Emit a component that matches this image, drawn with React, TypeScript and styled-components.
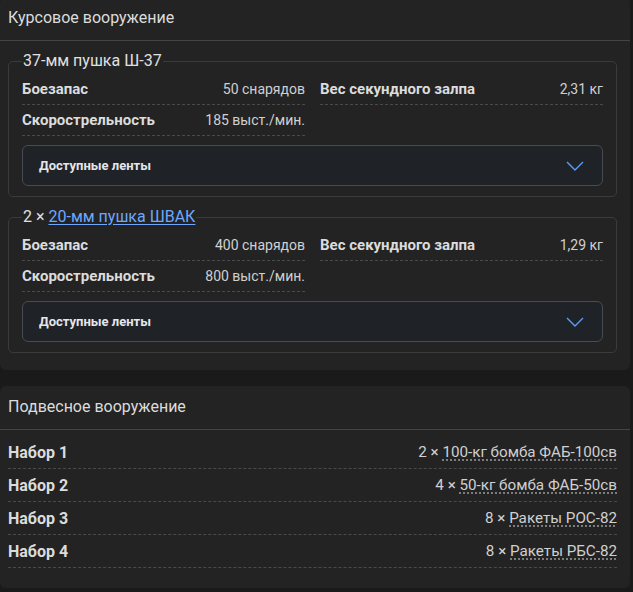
import React from 'react';
import styled, { createGlobalStyle } from 'styled-components';

const GlobalStyle = createGlobalStyle`
  html, body {
    margin: 0;
    padding: 0;
    background-color: #1a1a1a;
  }
  body {
    font-family: Roboto, "Liberation Sans", sans-serif;
    color: #dedede;
  }
`;

// Page and cards
const Page = styled.div`
  width: 630px;
  margin-top: -3px;
  display: flex;
  flex-direction: column;
  gap: 16px;
`;

const Card = styled.section`
  background-color: #232323;
  border-radius: 6px;
`;

const CardHeader = styled.h2`
  margin: 0;
  padding: 11px 8px 12px;
  font-size: 16px;
  line-height: 20px;
  font-weight: 400;
  color: #dcdcdc;
  border-bottom: 1px solid #444;
`;

const CardBody = styled.div<{ $top: number; $bottom: number; $gap: number }>`
  padding: ${p => p.$top}px 13px ${p => p.$bottom}px 8px;
  display: flex;
  flex-direction: column;
  gap: ${p => p.$gap}px;
`;

// Weapon block (fieldset with legend)
const WeaponBox = styled.fieldset`
  margin: 0;
  padding: 3px 13px 10px;
  border: 1px solid #3b3b3b;
  border-radius: 5px;
  min-width: 0;
`;

const WeaponTitle = styled.legend`
  padding: 0 1px;
  font-size: 16px;
  line-height: 20px;
  color: #e0e0e0;
`;

const Link = styled.a`
  color: #6ea8fe;
  text-decoration: underline;
  text-underline-offset: 2px;
`;

const StatGrid = styled.div`
  display: grid;
  grid-template-columns: 1fr 1fr;
  column-gap: 15px;
`;

const StatRow = styled.div`
  display: flex;
  justify-content: space-between;
  align-items: center;
  height: 30px;
  border-bottom: 1px dashed #4a4a4a;
`;

const StatLabel = styled.span`
  font-size: 15px;
  font-weight: 700;
  color: #dcdcdc;
`;

const StatValue = styled.span`
  font-size: 14px;
  color: #d0d0d0;
`;

const Belts = styled.button`
  margin-top: 9px;
  width: 100%;
  height: 41px;
  display: flex;
  align-items: center;
  justify-content: space-between;
  padding: 0 18px 0 16px;
  background-color: #1f2227;
  border: 1px solid #474c54;
  border-radius: 6px;
  font-family: Roboto, "Liberation Sans", sans-serif;
  font-size: 13px;
  font-weight: 700;
  color: #e4e6ea;
  cursor: pointer;
`;

// Suspended armament list
const LoadoutRow = styled.div`
  display: flex;
  justify-content: space-between;
  align-items: center;
  height: 32px;
  border-bottom: 1px dashed #4a4a4a;
`;

const LoadoutName = styled.span`
  font-size: 16px;
  font-weight: 700;
  color: #dcdcdc;
`;

const LoadoutValue = styled.span`
  font-size: 15.2px;
  color: #d0d0d0;
`;

const Dotted = styled.span`
  text-decoration: underline dotted;
  text-underline-offset: 3px;
  text-decoration-color: #999;
`;

const Chevron = () => (
  <svg width="18" height="10" viewBox="0 0 18 10" fill="none">
    <path d="M1 1l8 8 8-8" stroke="#5b9cf6" strokeWidth="1.4" />
  </svg>
);

const guns = [
  {
    id: 1,
    count: null,
    name: '37-мм пушка Ш-37',
    link: false,
    ammo: '50 снарядов',
    salvo: '2,31 кг',
    rate: '185 выст./мин.',
  },
  {
    id: 2,
    count: 2,
    name: '20-мм пушка ШВАК',
    link: true,
    ammo: '400 снарядов',
    salvo: '1,29 кг',
    rate: '800 выст./мин.',
  },
];

const loadouts = [
  { id: 1, count: 2, item: '100-кг бомба ФАБ-100св' },
  { id: 2, count: 4, item: '50-кг бомба ФАБ-50св' },
  { id: 3, count: 8, item: 'Ракеты РОС-82' },
  { id: 4, count: 8, item: 'Ракеты РБС-82' },
];

const App: React.FC = () => {
  return (
    <>
      <GlobalStyle />
      <Page>
        <Card>
          <CardHeader>Курсовое вооружение</CardHeader>
          <CardBody $top={10} $bottom={17} $gap={10}>
            {guns.map(gun => (
              <WeaponBox key={gun.id}>
                <WeaponTitle>
                  {gun.count ? `${gun.count} × ` : ''}
                  {gun.link ? <Link href="#">{gun.name}</Link> : gun.name}
                </WeaponTitle>
                <StatGrid>
                  <StatRow>
                    <StatLabel>Боезапас</StatLabel>
                    <StatValue>{gun.ammo}</StatValue>
                  </StatRow>
                  <StatRow>
                    <StatLabel>Вес секундного залпа</StatLabel>
                    <StatValue>{gun.salvo}</StatValue>
                  </StatRow>
                  <StatRow>
                    <StatLabel>Скорострельность</StatLabel>
                    <StatValue>{gun.rate}</StatValue>
                  </StatRow>
                </StatGrid>
                <Belts>
                  Доступные ленты
                  <Chevron />
                </Belts>
              </WeaponBox>
            ))}
          </CardBody>
        </Card>

        <Card>
          <CardHeader>Подвесное вооружение</CardHeader>
          <CardBody $top={6} $bottom={20} $gap={0}>
            {loadouts.map(l => (
              <LoadoutRow key={l.id}>
                <LoadoutName>Набор {l.id}</LoadoutName>
                <LoadoutValue>
                  {l.count} × <Dotted>{l.item}</Dotted>
                </LoadoutValue>
              </LoadoutRow>
            ))}
          </CardBody>
        </Card>
      </Page>
    </>
  );
};

export default App;
